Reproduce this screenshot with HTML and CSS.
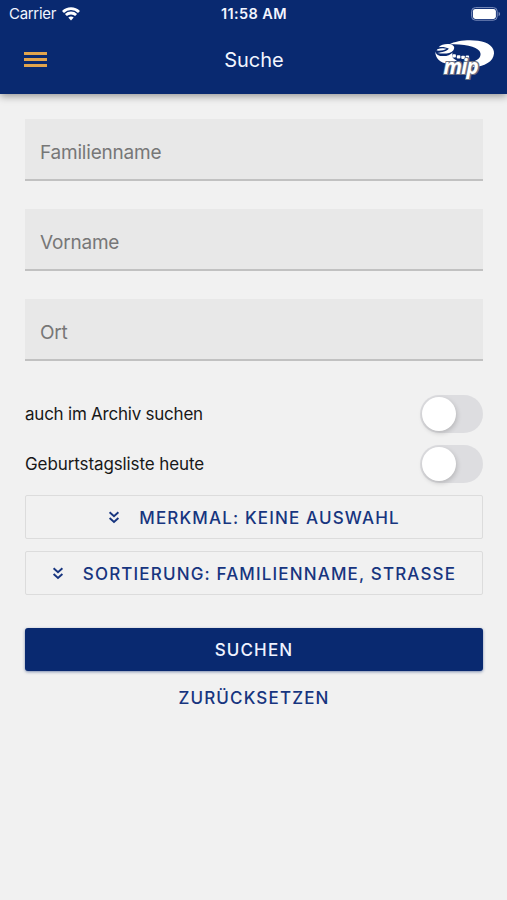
FILE: index.html
```
<!DOCTYPE html>
<html lang="de">
<head>
    <meta charset="UTF-8">
    <meta name="viewport" content="width=device-width, initial-scale=1.0">
    <title>Suche</title>
    <link rel="stylesheet" href="styles.css">
</head>
<body>
    <header>
        <div class="status-bar">
            <div class="carrier">
                <span>Carrier</span>
                <svg width="18" height="14" viewBox="0 0 18 14" fill="none" stroke="#fff" stroke-width="2.8">
                    <path d="M1 4.9C5.5.5 12.5.5 17 4.9"/>
                    <path d="M3.9 8.1C6.8 5.3 11.2 5.3 14.1 8.1"/>
                    <path d="M6.3 10.6C7.9 9.1 10.1 9.1 11.7 10.6L9 13.4Z" fill="#fff" stroke="none"/>
                </svg>
            </div>
            <div class="clock">11:58 AM</div>
            <svg class="battery" width="30" height="14" viewBox="0 0 30 14">
                <rect x=".6" y=".6" width="25.6" height="12.6" rx="3.8" fill="none" stroke="#7d8fbd"/>
                <rect x="1.9" y="1.9" width="23" height="10" rx="2.4" fill="#fff"/>
                <path d="M27.6 4.8C29.6 5.6 29.6 8.4 27.6 9.2Z" fill="#7d8fbd"/>
            </svg>
        </div>
        <div class="toolbar">
            <button class="menu-button" aria-label="Menü">
                <span></span>
                <span></span>
                <span></span>
            </button>
            <h1>Suche</h1>
            <svg class="logo" width="62" height="44" viewBox="0 0 62 44">
                <path d="M15 6.4C22 2.8 34 1.4 44 2.8C55 4.3 60.4 9.6 60 15.5C59.4 23.5 51 28.6 38 29.2L37 24.5C43.6 22.6 47.4 19.3 46.4 15C45 9.4 33 5.6 15 6.4Z" fill="#fff"/>
                <path d="M4.6 9.2C7 6.8 11 5.7 15 6.1C19.6 6.6 21.6 9.4 19.2 12.4C16.2 16 9 15.8 3.4 14.9C8 14.6 13.2 13.2 14.8 10.6C12 9 8.2 8.7 4.6 9.2Z" fill="#fff"/>
                <path d="M3.4 11.2C6.4 9.8 10.4 9.9 12.6 10.8C10.4 12.4 6 13 2.6 12.6Z" fill="#fff"/>
                <path d="M1.4 13.4C2.4 16.8 4.8 18 9 18.1C13 18.2 16.6 16.6 18.6 14.4C17.2 18.3 18.6 20.8 23 22.4L14 25.8C6 24.6 1 20 1.4 13.4Z" fill="#fff"/>
                <g fill="#fff">
                    <rect x="18.3" y="16.2" width="3.6" height="3.3" rx=".8"/>
                    <rect x="22.8" y="17.3" width="3.6" height="3.3" rx=".8"/>
                    <rect x="27.3" y="17.8" width="3.6" height="3.3" rx=".8"/>
                    <rect x="31.7" y="17.6" width="3.4" height="3.3" rx=".8"/>
                </g>
                <text class="logo-shadow" x="9.8" y="36">mip</text>
                <text class="logo-text" x="9.4" y="35.6">mip</text>
            </svg>
        </div>
    </header>

    <main>
        <form>
            <input class="field" type="text" placeholder="Familienname">
            <input class="field" type="text" placeholder="Vorname">
            <input class="field" type="text" placeholder="Ort">

            <label class="toggle-row">
                <span class="label-archive">auch im Archiv suchen</span>
                <input class="toggle" type="checkbox">
            </label>
            <label class="toggle-row">
                <span class="label-birthday">Geburtstagsliste heute</span>
                <input class="toggle" type="checkbox">
            </label>

            <button class="outlined" type="button">
                <svg width="12" height="13" viewBox="0 0 12 13">
                    <path d="M1.6 1.2L6 5.2L10.4 1.2M1.6 7L6 11L10.4 7"/>
                </svg>
                <span>MERKMAL: KEINE AUSWAHL</span>
            </button>
            <button class="outlined" type="button">
                <svg width="12" height="13" viewBox="0 0 12 13">
                    <path d="M1.6 1.2L6 5.2L10.4 1.2M1.6 7L6 11L10.4 7"/>
                </svg>
                <span>SORTIERUNG: FAMILIENNAME, STRASSE</span>
            </button>

            <button class="submit" type="button">SUCHEN</button>
            <button class="reset" type="reset">ZURÜCKSETZEN</button>
        </form>
    </main>
</body>
</html>
```
FILE: styles.css
```
* {
    box-sizing: border-box;
}

body {
    margin: 0;
    min-height: 900px;
    background-color: #f1f1f1;
    color: #181818;
    font-family: Inter, 'Liberation Sans', sans-serif;
}

button {
    padding: 0;
    border: none;
    background: none;
    font-family: inherit;
    cursor: pointer;
}

header {
    height: 94px;
    background-color: #092970;
    color: #f2f5ff;
    box-shadow: 0 2px 8px rgba(0, 0, 0, 0.4);
}

.status-bar {
    display: grid;
    grid-template-columns: 1fr auto 1fr;
    align-items: center;
    height: 27px;
    padding: 0 6px 0 9px;
}

.carrier {
    display: flex;
    align-items: center;
    gap: 6px;
    font-size: 15px;
    letter-spacing: -0.3px;
}

.clock {
    font-size: 14.5px;
    font-weight: 600;
    letter-spacing: 0.4px;
    padding-right: 2px;
}

.battery {
    justify-self: end;
}

.toolbar {
    display: grid;
    grid-template-columns: 1fr auto 1fr;
    align-items: center;
    height: 66px;
    padding: 0 11px 0 12px;
}

.menu-button {
    display: flex;
    flex-direction: column;
    gap: 3px;
    width: 23px;
    margin: 0 0 1px 12px;
}

.menu-button span {
    height: 3px;
    background-color: #e1a44d;
}

h1 {
    margin: 0;
    font-size: 20px;
    font-weight: 400;
}

.logo {
    justify-self: end;
}

.logo text {
    font-family: 'Open Sans', sans-serif;
    font-size: 20.5px;
    font-weight: 700;
    font-style: italic;
    letter-spacing: -0.7px;
}

.logo-shadow {
    fill: #8c8c96;
    stroke: #6e7182;
    stroke-width: 2.2px;
}

.logo-text {
    fill: #fff;
}

form {
    display: flex;
    flex-direction: column;
    padding: 25px 24px 0 25px;
}

.field {
    height: 62px;
    margin-bottom: 28px;
    padding: 7px 15px 0;
    border: none;
    border-bottom: 2px solid #c1c1c1;
    border-radius: 0;
    background-color: #e8e8e8;
    font-family: inherit;
    font-size: 19px;
    letter-spacing: -0.2px;
}

.field::placeholder {
    color: #777;
    opacity: 1;
}

.toggle-row {
    display: flex;
    justify-content: space-between;
    align-items: center;
    height: 38px;
    margin: 6px 0;
    font-size: 17px;
}

.label-archive {
    letter-spacing: -0.23px;
}

.label-birthday {
    letter-spacing: -0.1px;
}

.toggle {
    appearance: none;
    width: 63px;
    height: 38px;
    margin: 0;
    padding: 2px;
    border-radius: 19px;
    background-color: #dddde0;
}

.toggle::before {
    content: '';
    display: block;
    width: 34px;
    height: 34px;
    border-radius: 50%;
    background-color: #fff;
    box-shadow: 1px 2px 5px rgba(0, 0, 0, 0.18);
}

.toggle:checked::before {
    margin-left: 25px;
}

.outlined,
.submit,
.reset {
    display: flex;
    justify-content: center;
    align-items: center;
    height: 44px;
    color: #17357f;
    font-size: 17px;
    font-weight: 500;
    letter-spacing: 1.15px;
}

.outlined {
    gap: 19px;
    margin: 6px 0;
    padding-top: 2px;
    border: 1px solid #dcdcdc;
    border-radius: 2px;
}

.outlined svg {
    fill: none;
    stroke: #17357f;
    stroke-width: 1.9;
    margin-bottom: 2px;
}

.submit {
    height: 43px;
    margin-top: 27px;
    border-radius: 3px;
    background-color: #092970;
    color: #f0f3ff;
    box-shadow: 0 1px 3px rgba(9, 41, 112, 0.5);
}

.reset {
    margin-top: 5px;
}
```
